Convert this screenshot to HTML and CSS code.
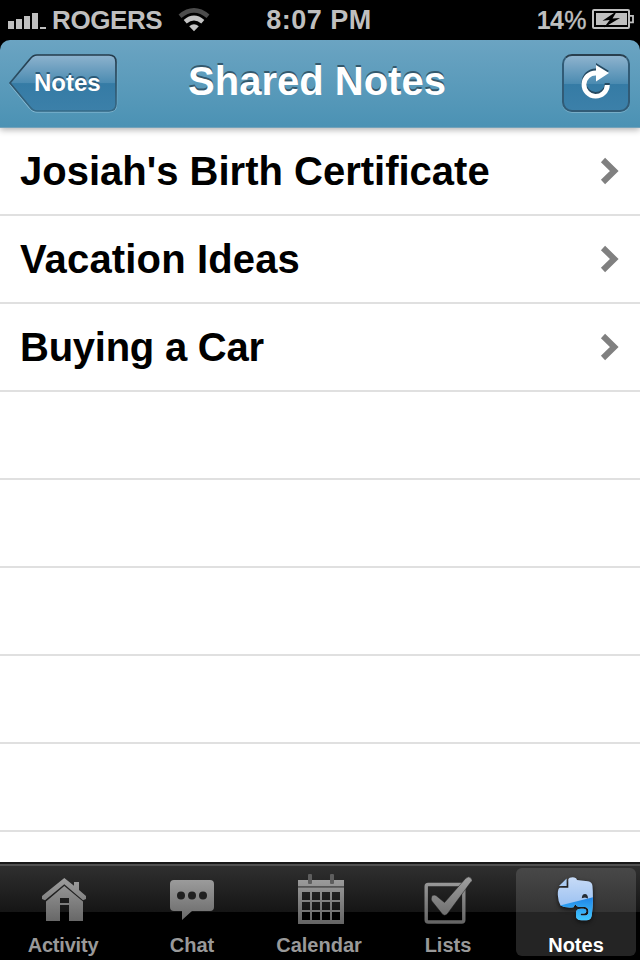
FILE: index.html
```html
<!DOCTYPE html>
<html lang="en">
<head>
<meta charset="utf-8">
<title>Shared Notes</title>
<link rel="stylesheet" href="styles.css">
</head>
<body>
<header class="status">
  <div class="status-left">
    <svg class="signal" width="38" height="18" viewBox="0 0 38 18" fill="#bfbfbf"><path d="M0 8h6v8H0zM8 6h6v10H8zM16 3h6v13h-6zM24 0h6v16h-6zM32 14h6v2h-6z"/></svg>
    <span class="carrier">ROGERS</span>
    <svg class="wifi" width="32" height="24" viewBox="0 0 32 24" fill="none"><path d="M2 8.2Q16-3.5 30 8.2" stroke="#4c4c4c" stroke-width="4.5"/><path d="M7.2 13.8Q16 6.2 24.8 13.8" stroke="#c4c4c4" stroke-width="4.6"/><path d="M11.2 18.2Q16 14.2 20.8 18.2L16 23.2z" fill="#c4c4c4"/></svg>
  </div>
  <span class="clock">8:07 PM</span>
  <div class="status-right">
    <span class="percent">14<span class="pct">%</span></span>
    <svg width="42" height="20" viewBox="0 0 42 20"><rect x="1" y="1" width="36" height="18" rx="1" fill="none" stroke="#bfbfbf" stroke-width="2"/><path d="M38 6.8h3v6.5h-3" fill="none" stroke="#bfbfbf" stroke-width="1.8"/><path fill="#bfbfbf" d="M4 4h31v12H4z"/><path d="M25 2L10.5 11.8l7.2-.8L12 18.5 28 9l-7.5.6z" fill="#000"/></svg>
  </div>
</header>
<nav class="navbar">
  <button class="back">
    <svg class="back-shape" width="112" height="64" viewBox="0 0 112 64">
      <defs><linearGradient id="btn" x1="0" y1="0" x2="0" y2="1"><stop offset="0" stop-color="#8eb3ce"/><stop offset=".5" stop-color="#4b8bb1"/><stop offset=".51" stop-color="#357ba5"/><stop offset="1" stop-color="#3c80a9"/></linearGradient>
      <linearGradient id="edge" x1="0" y1="0" x2="0" y2="1"><stop offset="0" stop-color="#243b4b"/><stop offset="1" stop-color="#356986"/></linearGradient></defs>
      <path d="M29 5H101Q109 5 109 13V53Q109 61 101 61H29Q25 61 22 57L3 34Q2 33 3 32L22 9Q25 5 29 5z" fill="none" stroke="#8fc0d8" stroke-width="1.2" transform="translate(-.4 1)"/>
      <path d="M29 5H101Q108 5 108 12V54Q108 61 101 61H29Q25 61 22 57L2 33 22 9Q25 5 29 5z" fill="url(#btn)" stroke="url(#edge)" stroke-width="1.7"/>
    </svg>
    <span class="back-label">Notes</span>
  </button>
  <h1 class="title">Shared Notes</h1>
  <button class="refresh">
    <svg width="32" height="38" viewBox="0 0 32 38"><path fill="#264a62" transform="translate(0 -2)" d="M15 8.4a14.1 14.1 0 1 0 13.8 14.6h-5A9.2 9.2 0 1 1 15 13.6v6l13-8.5L15 3z"/><path fill="#fff" d="M15 8.4a14.1 14.1 0 1 0 13.8 14.6h-5A9.2 9.2 0 1 1 15 13.6v6l13-8.5L15 3z"/></svg>
  </button>
</nav>
<main class="list">
  <a class="row">Josiah's Birth Certificate<svg class="chev" width="20" height="28" viewBox="0 0 20 28"><path d="M3 3L14.3 14 3 25" fill="none" stroke="#808080" stroke-width="6"/></svg></a>
  <a class="row vacation">Vacation Ideas<svg class="chev" width="20" height="28" viewBox="0 0 20 28"><path d="M3 3L14.3 14 3 25" fill="none" stroke="#808080" stroke-width="6"/></svg></a>
  <a class="row buying">Buying a Car<svg class="chev" width="20" height="28" viewBox="0 0 20 28"><path d="M3 3L14.3 14 3 25" fill="none" stroke="#808080" stroke-width="6"/></svg></a>
  <div class="row"></div>
  <div class="row"></div>
  <div class="row"></div>
  <div class="row"></div>
  <div class="row"></div>
</main>
<footer class="tabs">
  <a class="tab activity">
    <svg width="56" height="56" viewBox="0 0 56 56"><defs><linearGradient id="grey" gradientUnits="userSpaceOnUse" x1="0" y1="6" x2="0" y2="54"><stop offset="0" stop-color="#a0a0a0"/><stop offset="1" stop-color="#646464"/></linearGradient></defs>
    <path fill="url(#grey)" d="M6 26L28.3 8 38 15.8V12h5v8l7 6v3l-3 1.2L28.3 14.3 9 30.2 6 29z"/><path fill="url(#grey)" fill-rule="evenodd" d="M10 31.5L28.3 16 47 31.5V51H33V35H24V51H10zM24 28v5h9v-5z"/></svg>
    <span>Activity</span>
  </a>
  <a class="tab chat">
    <svg width="56" height="56" viewBox="0 0 56 56"><path fill="url(#grey)" d="M10 10H46Q50 10 50 14V37Q50 41 46 41H28L18 50V41H10Q6 41 6 37V14Q6 10 10 10z"/><g fill="#202020"><circle cx="17" cy="25.5" r="4"/><circle cx="28" cy="25.5" r="4"/><circle cx="39" cy="25.5" r="4"/></g></svg>
    <span>Chat</span>
  </a>
  <a class="tab calendar">
    <svg width="56" height="56" viewBox="0 0 56 56"><path fill="url(#grey)" fill-rule="evenodd" d="M6 10H52V54H6zM10 22v8h8v-8zM20 22v8h8v-8zM30 22v8h8v-8zM40 22v8h8v-8zM10 32v8h8v-8zM20 32v8h8v-8zM30 32v8h8v-8zM40 32v8h8v-8zM10 42v8h8v-8zM20 42v8h8v-8zM30 42v8h8v-8zM40 42v8h8v-8z"/><path fill="#555" d="M6 16h46v1.7H6z"/><rect x="16" y="4" width="4" height="10" rx="1" fill="#5e5e5e"/><rect x="38" y="4" width="4" height="10" rx="1" fill="#5e5e5e"/></svg>
    <span>Calendar</span>
  </a>
  <a class="tab lists">
    <svg width="56" height="56" viewBox="0 0 56 56"><rect x="6.2" y="14.5" width="37.6" height="37.5" rx="2" fill="none" stroke="url(#grey)" stroke-width="3.4"/><path d="M11.3 28Q12 24 16 25.5L24.5 32.5 45.5 8.5Q48.5 5.5 51 8T50.5 12.5L28 43Q24.5 47.5 21.5 43L11.8 31Q11 29.5 11.3 28z" fill="url(#grey)" stroke="#181818" stroke-width=".5"/></svg>
    <span>Lists</span>
  </a>
  <a class="tab notes active">
    <svg class="elephant" width="56" height="56" viewBox="0 0 56 56"><defs><linearGradient id="light" x1="0" y1="0" x2="0" y2="1"><stop offset="0" stop-color="#c9dcf7"/><stop offset="1" stop-color="#83b3ef"/></linearGradient><linearGradient id="blue" gradientUnits="userSpaceOnUse" x1="0" y1="28" x2="0" y2="50"><stop offset="0" stop-color="#2086e8"/><stop offset="1" stop-color="#42c8ff"/></linearGradient>
      <clipPath id="head"><path d="M20.3 9.3Q21 7.3 24.7 7.3T29 10L40 11.2Q44 11.6 44.5 16C45.3 25 45 37 43.7 45.5Q43 50.3 38.5 50.3H33.5Q28 50.3 28 45.5V43Q28 38.8 33 38.8H35.5Q38.3 39 38.3 41.3T35.8 43.5H33Q31.8 44.5 33.3 45.4H37.5Q40.5 45.2 40.5 41.5T37 37H31.5Q28.5 36.8 27.2 34.2L25.5 37.2Q17 38 12.5 35.5Q10 31 9.8 25Q9.7 18 12 17.8H20.3z"/></clipPath></defs>
      <g clip-path="url(#head)"><path fill="url(#light)" d="M8 6h40v46H8z"/><path fill="url(#blue)" d="M8 36.5L46 27V53H8z"/></g>
      <path d="M11 16L18.6 8.5V16z" fill="#aac9ef"/><path d="M33.8 28.3Q34 24 37 24 39.9 24.2 40 28.4L37 27.5z" fill="#252b34"/></svg>
    <span>Notes</span>
  </a>
</footer>
</body>
</html>
```
FILE: styles.css
```css
* { box-sizing: border-box; }
body {
  margin: 0;
  width: 640px;
  height: 960px;
  overflow: hidden;
  display: flex;
  flex-direction: column;
  background: #000;
  font-family: "Liberation Sans", Arial, sans-serif;
  font-weight: bold;
}
svg { display: block; flex: none; }
button { border: 0; padding: 0; margin: 0; background: none; font: inherit; color: #fff; }
.status {
  flex: none;
  height: 40px;
  display: grid;
  grid-template-columns: 1fr auto 1fr;
  align-items: center;
  padding: 0 6px 0 8px;
  background: #000;
  color: #bfbfbf;
  font-size: 27px;
  line-height: 40px;
  white-space: nowrap;
}
.status-left, .status-right { display: flex; align-items: center; }
.signal { margin-top: 4px; }
.carrier { margin-left: 6px; width: 126px; font-size: 26px; letter-spacing: -.4px; }
.clock { letter-spacing: .5px; margin-right: 4px; }
.status-right { justify-content: flex-end; gap: 6px; }
.status-right svg { margin-top: -2px; }
.percent { font-size: 25px; letter-spacing: -.6px; }
.pct { font-weight: normal; margin-left: 1px; -webkit-text-stroke: .4px #bfbfbf; }
.navbar {
  flex: none;
  position: relative;
  z-index: 1;
  height: 88px;
  display: grid;
  grid-template-columns: 118px 1fr 124px;
  background: linear-gradient(#6ba4c2, #4b92b4);
  border-radius: 10px 10px 0 0;
  border-bottom: 1px solid #72a2ba;
  box-shadow: 0 2px 6px rgba(0, 0, 0, .3);
}
.back { height: 64px; margin: 10px 0 0 8px; display: grid; }
.back-shape, .back-label { grid-area: 1 / 1; }
.back-label {
  padding-left: 26px;
  text-align: left;
  font-size: 24px;
  line-height: 66px;
  text-shadow: 0 -2px 0 #2b5a78;
}
.title {
  margin: 0;
  text-align: center;
  color: #fff;
  font-size: 40px;
  line-height: 82px;
  text-shadow: 0 -2px 0 #34596d;
  white-space: nowrap;
}
.refresh {
  width: 68px;
  height: 58px;
  margin: 14px 10px 0 auto;
  display: flex;
  justify-content: center;
  padding: 6px 0 0 2px;
  border: 2px solid #315b76;
  border-top-color: #293f4e;
  border-radius: 10px;
  background: linear-gradient(#8eb3ce, #4b8bb1 51%, #357ba5 52%, #3c80a9);
  box-shadow: 0 1px 0 #77adc7;
}
.list { flex: 1; min-height: 0; overflow: hidden; background: #fff; }
.row {
  height: 88px;
  display: flex;
  justify-content: space-between;
  padding: 0 20px;
  border-bottom: 2px solid #e0e0e0;
  color: #000;
  font-size: 40px;
  line-height: 86px;
  white-space: nowrap;
}
.vacation { letter-spacing: .15px; }
.buying { letter-spacing: -.25px; }
.chev { margin-top: 29px; }
.tabs {
  flex: none;
  height: 98px;
  display: grid;
  grid-template-columns: repeat(5, 128px);
  border-top: 2px solid #191919;
  background: linear-gradient(#505050 0 2px, #2f2f2f 2px, #151515 48px, #000 48px);
}
.tab {
  display: flex;
  flex-direction: column;
  align-items: center;
  padding-top: 6px;
  color: #999;
  font-size: 20px;
  line-height: 22px;
}
.tab span { margin-top: 8px; }
.activity span, .calendar span { margin-right: 2px; }
.activity span { letter-spacing: -.2px; }
.active {
  margin: 4px 4px 4px 4px;
  padding-top: 2px;
  border-radius: 6px;
  background: linear-gradient(#484848, #343434 44px, #242424 44px);
  color: #fff;
}
.elephant { filter: drop-shadow(0 2px 2px #111); }
```
